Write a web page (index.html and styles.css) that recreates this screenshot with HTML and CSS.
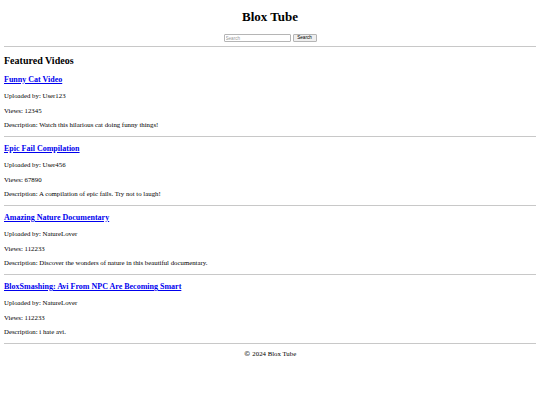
FILE: index.html
```html
<!DOCTYPE html>
<html lang="en">
<head>
<meta charset="utf-8">
<title>Blox Tube</title>
<link rel="stylesheet" href="styles.css">
</head>
<body>
<header class="site-header">
  <h1 class="site-title">Blox Tube</h1>
  <form class="search-form">
    <input class="search-input" type="text" placeholder="Search">
    <button class="search-button" type="button">Search</button>
  </form>
</header>
<main class="content">
  <h2 class="section-title">Featured Videos</h2>
  <div class="video">
    <h3 class="video-title"><a href="#">Funny Cat Video</a></h3>
    <p>Uploaded by: User123</p>
    <p>Views: 12345</p>
    <p>Description: Watch this hilarious cat doing funny things!</p>
  </div>
  <div class="video">
    <h3 class="video-title"><a href="#">Epic Fail Compilation</a></h3>
    <p>Uploaded by: User456</p>
    <p>Views: 67890</p>
    <p>Description: A compilation of epic fails. Try not to laugh!</p>
  </div>
  <div class="video">
    <h3 class="video-title"><a href="#">Amazing Nature Documentary</a></h3>
    <p>Uploaded by: NatureLover</p>
    <p>Views: 112233</p>
    <p>Description: Discover the wonders of nature in this beautiful documentary.</p>
  </div>
  <div class="video">
    <h3 class="video-title"><a href="#">BloxSmashing: Avi From NPC Are Becoming Smart</a></h3>
    <p>Uploaded by: NatureLover</p>
    <p>Views: 112233</p>
    <p>Description: i hate avi.</p>
  </div>
</main>
<footer class="site-footer">
  <p><span class="copy">&copy;&#xFE0E;</span> 2024 Blox Tube</p>
</footer>
</body>
</html>
```

FILE: styles.css
```css
html, body {
  background: #fff;
}
body {
  margin: 0 4px;
  font-family: "Liberation Serif", "Times New Roman", serif;
  color: #000;
  font-size: 6.8px;
}
.site-header {
  text-align: center;
  border-bottom: 1px solid #c8c8c8;
  padding: 9px 0 4px;
}
.site-title {
  margin: 0;
  font-size: 13px;
  line-height: 15px;
  font-weight: bold;
}
.search-form {
  margin: 10px 0 0;
  display: flex;
  justify-content: center;
  align-items: center;
  gap: 2px;
  height: 8px;
}
.search-input {
  box-sizing: border-box;
  width: 67px;
  height: 8px;
  margin: 0;
  padding: 0 1px;
  border: 1px solid #b5b5b5;
  border-radius: 1px;
  font-family: "Liberation Sans", Arial, sans-serif;
  font-size: 4.6px;
  color: #000;
  background: #fff;
}
.search-input::placeholder {
  color: #9a9a9a;
}
.search-button {
  box-sizing: border-box;
  width: 24px;
  height: 8px;
  margin: 0;
  padding: 0;
  border: 1px solid #b5b5b5;
  border-radius: 1px;
  background: #efefef;
  font-family: "Liberation Sans", Arial, sans-serif;
  font-size: 4.6px;
  line-height: 6px;
  color: #000;
}
.section-title {
  font-size: 10px;
  line-height: 12px;
  margin: 8px 0 8px;
  font-weight: bold;
}
.video {
  border-bottom: 1px solid #c8c8c8;
}
.video-title {
  font-size: 8px;
  line-height: 10px;
  margin: 7.5px 0 7px;
  font-weight: bold;
}
.video-title a {
  color: #0000ee;
  text-decoration: underline;
}
.video p {
  margin: 6.5px 0;
  line-height: 8px;
}
.site-footer {
  text-align: center;
}
.site-footer p {
  margin: 6px 0;
  line-height: 8px;
}
.copy {
  font-family: "DejaVu Serif", "Liberation Serif", serif;
  color: #000;
}
```
